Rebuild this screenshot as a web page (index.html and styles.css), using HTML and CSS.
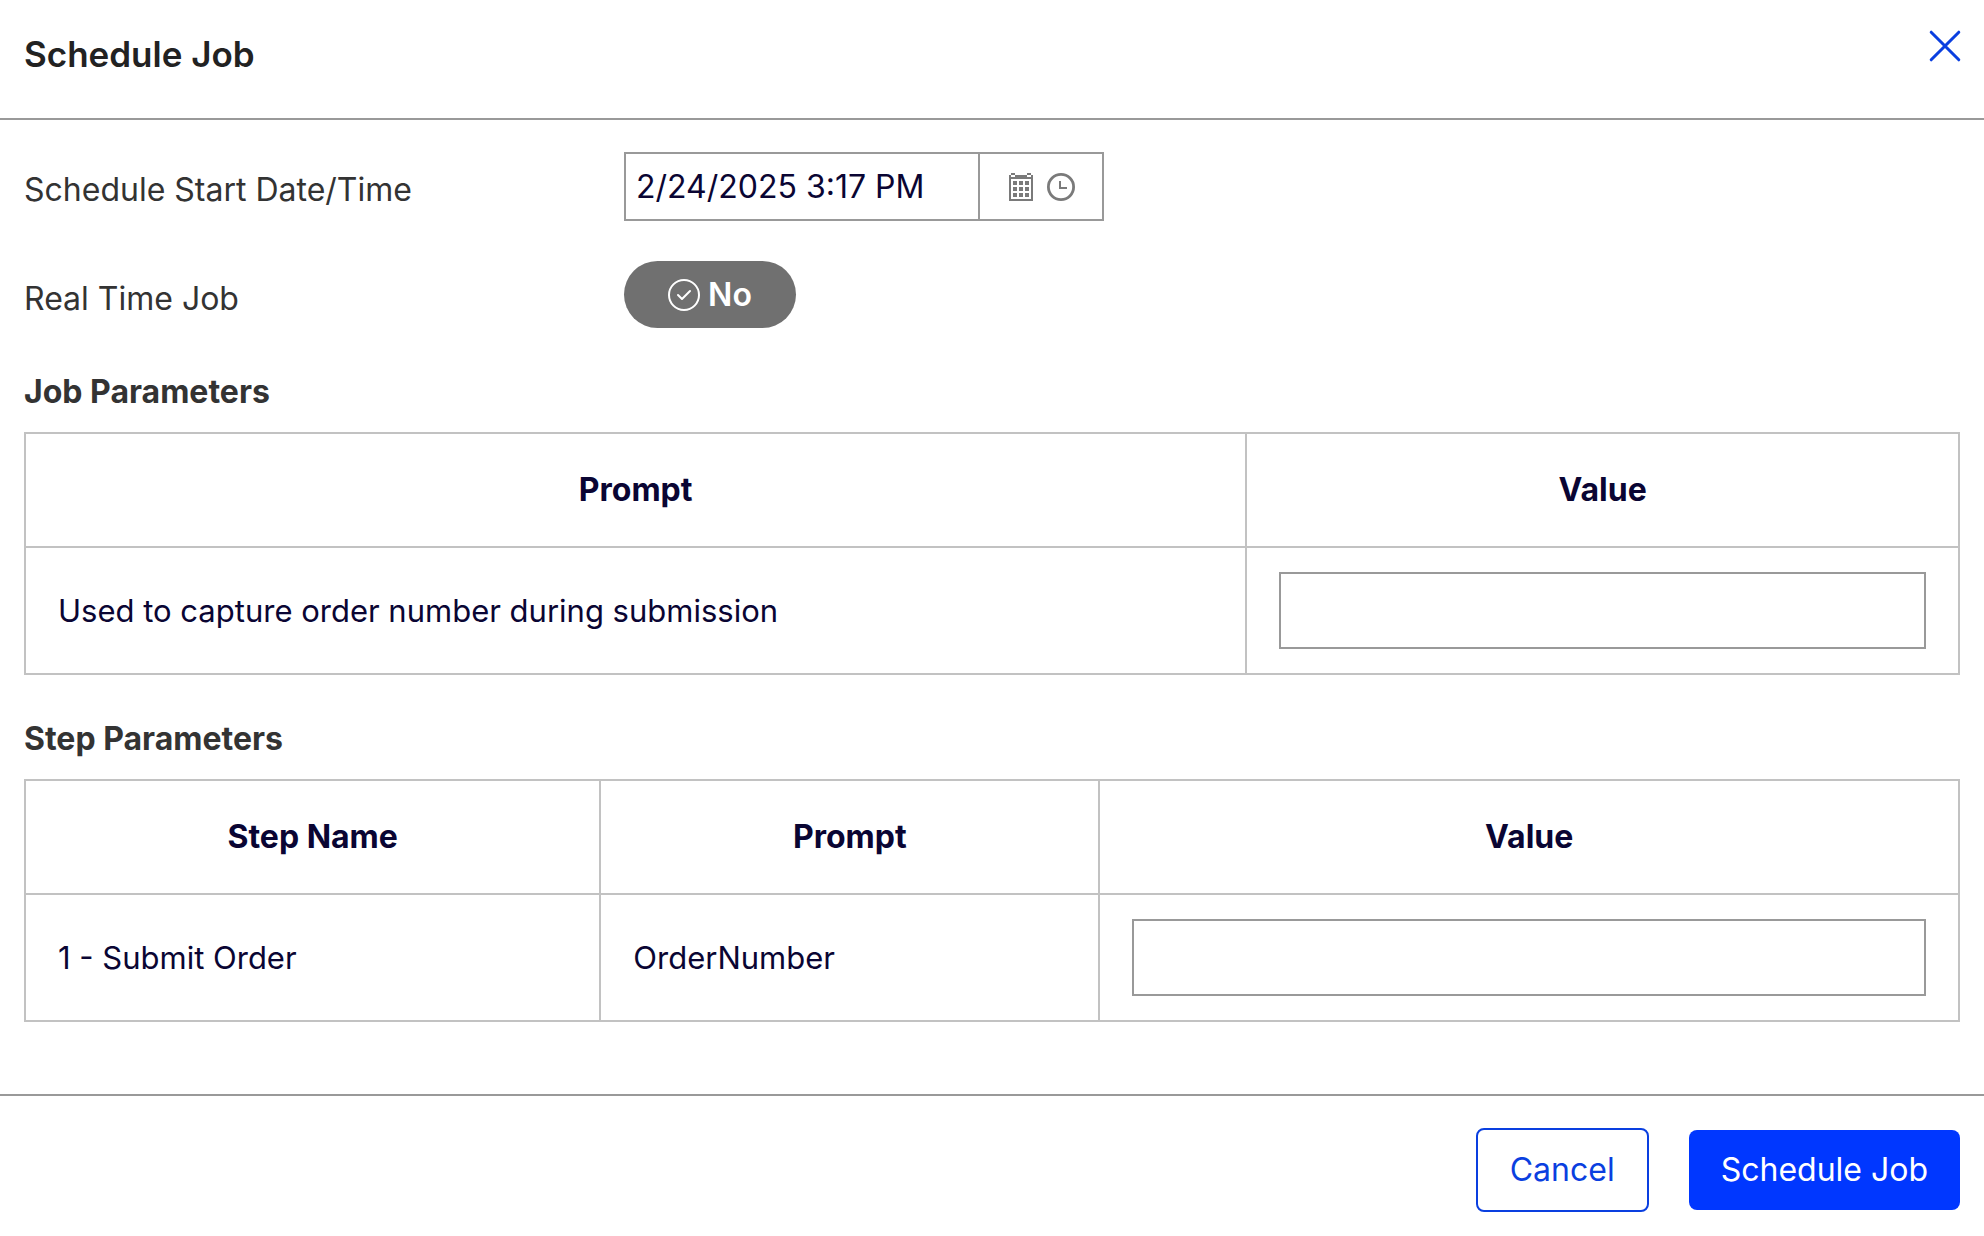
FILE: index.html
```html
<!DOCTYPE html>
<html lang="en">
<head>
<meta charset="utf-8">
<meta name="viewport" content="width=device-width, initial-scale=1">
<title>Schedule Job</title>
<link rel="stylesheet" href="styles.css">
</head>
<body>
<form class="dialog">
  <header class="dialog-header">
    <h1 class="dialog-title">Schedule Job</h1>
    <button class="icon-button" type="button" aria-label="Close">
      <svg width="32" height="32" viewBox="0 0 32 32" fill="none" stroke="#0a3fe0" stroke-width="3" stroke-linecap="round"><path d="M2.2 2.2 29.8 29.8M29.8 2.2 2.2 29.8"/></svg>
    </button>
  </header>

  <main class="dialog-body">
    <div class="field">
      <label for="start">Schedule Start Date/Time</label>
      <div class="date-picker">
        <input class="date-input" id="start" type="text" value="2/24/2025 3:17 PM">
        <div class="date-actions">
          <button class="icon-button" type="button" aria-label="Open calendar">
            <svg width="24" height="28" viewBox="0 0 24 28" fill="#7a7a7a"><path fill-rule="evenodd" d="M0 2H2V4H6V2H18V4H22V2H24V28H0ZM2 6V26H22V6Z"/><path d="M2 0H6V2H2ZM18 0H22V2H18Z"/><path d="M4 8h4v4H4zM10 8h4v4h-4zM16 8h4v4h-4zM4 14h4v4H4zM10 14h4v4h-4zM16 14h4v4h-4zM4 20h4v4H4zM10 20h4v4h-4zM16 20h4v4h-4z"/></svg>
          </button>
          <button class="icon-button" type="button" aria-label="Open time list">
            <svg width="28" height="28" viewBox="0 0 28 28" fill="none" stroke="#7a7a7a"><circle cx="14" cy="14" r="12.6" stroke-width="2.8"/><path d="M13 8v7h7" stroke-width="2"/></svg>
          </button>
        </div>
      </div>
    </div>

    <div class="field">
      <label for="realtime">Real Time Job</label>
      <button class="toggle" id="realtime" type="button" role="switch" aria-checked="false">
        <svg width="32" height="32" viewBox="0 0 32 32" fill="none" stroke="#fff" stroke-width="2" stroke-linecap="round" stroke-linejoin="round"><circle cx="16" cy="16" r="15"/><path d="M10 16 14 20 22 12"/></svg>
        <span>No</span>
      </button>
    </div>

    <section class="section">
      <h2 class="section-title">Job Parameters</h2>
      <table class="grid job-grid">
        <colgroup><col class="job-prompt"><col></colgroup>
        <thead><tr><th scope="col">Prompt</th><th scope="col">Value</th></tr></thead>
        <tbody><tr>
          <td><label for="job-value">Used to capture order number during submission</label></td>
          <td><input class="value-input" id="job-value" type="text"></td>
        </tr></tbody>
      </table>
    </section>

    <section class="section">
      <h2 class="section-title">Step Parameters</h2>
      <table class="grid step-grid">
        <colgroup><col class="step-name"><col class="step-prompt"><col></colgroup>
        <thead><tr><th scope="col">Step Name</th><th scope="col">Prompt</th><th scope="col">Value</th></tr></thead>
        <tbody><tr>
          <td>1 - Submit Order</td>
          <td><label for="step-value">OrderNumber</label></td>
          <td><input class="value-input" id="step-value" type="text"></td>
        </tr></tbody>
      </table>
    </section>
  </main>

  <footer class="dialog-footer">
    <button class="button button-outline" type="button">Cancel</button>
    <button class="button button-primary" type="submit">Schedule Job</button>
  </footer>
</form>
</body>
</html>
```
FILE: styles.css
```css
* {
  box-sizing: border-box;
}

body {
  margin: 0;
  background: #fff;
  color: #333;
  font: 400 32px/40px Inter, "Liberation Sans", sans-serif;
}

button,
input {
  margin: 0;
  padding: 0;
  border: 0;
  border-radius: 0;
  background: none;
  color: inherit;
  font: inherit;
}

svg {
  display: block;
}

.dialog-header {
  display: flex;
  justify-content: space-between;
  align-items: flex-start;
  padding: 30px 23px 40px 24px;
  border-bottom: 2px solid #999;
}

.dialog-title {
  margin: 0;
  color: #222;
  font-size: 35px;
  font-weight: 600;
  line-height: 48px;
}

.dialog-body {
  padding: 32px 24px 72px;
}

.field {
  display: grid;
  grid-template-columns: 600px 1fr;
  justify-items: start;
  margin-bottom: 40px;
}

.field > label {
  padding-top: 18px;
}

.date-picker {
  display: flex;
  width: 480px;
  height: 69px;
  border: 2px solid #999;
}

.date-input {
  flex: 1;
  min-width: 0;
  padding: 0 10px;
  color: #0a0533;
}

.date-actions {
  display: flex;
  align-items: center;
  gap: 14px;
  padding: 1px 27px 0 29px;
  border-left: 2px solid #999;
}

.toggle {
  display: flex;
  align-items: center;
  justify-content: center;
  gap: 8px;
  width: 172px;
  height: 67px;
  border-radius: 34px;
  background: #707070;
  color: #fff;
  font-weight: 600;
}

.section {
  padding-top: 4px;
  margin-bottom: 40px;
}

.section:last-child {
  margin-bottom: 0;
}

.section-title {
  margin: 0 0 20px;
  font-size: 32px;
  font-weight: 700;
  line-height: 40px;
}

.grid {
  width: 100%;
  border-collapse: collapse;
  table-layout: fixed;
  color: #0a0533;
}

.grid td {
  padding: 24px 32px;
  border: 2px solid #c2c2c2;
  font-size: 31px;
  text-align: left;
}

.grid th {
  padding: 36px 32px;
  border: 2px solid #c2c2c2;
  font-weight: 700;
  text-align: center;
}

.job-prompt {
  width: 63.15%;
}

.step-name {
  width: 29.75%;
}

.step-prompt {
  width: 25.8%;
}

.value-input {
  display: block;
  width: 100%;
  height: 77px;
  padding: 0 12px;
  border: 2px solid #999;
}

.dialog-footer {
  display: flex;
  justify-content: flex-end;
  align-items: center;
  gap: 40px;
  padding: 32px 24px 24px;
  border-top: 2px solid #999;
}

.button {
  padding: 20px 32px;
  border-radius: 8px;
}

.button-outline {
  border: 2px solid #0a3fe0;
  color: #0a3fe0;
}

.button-primary {
  background: #0037ff;
  color: #fff;
}
```
